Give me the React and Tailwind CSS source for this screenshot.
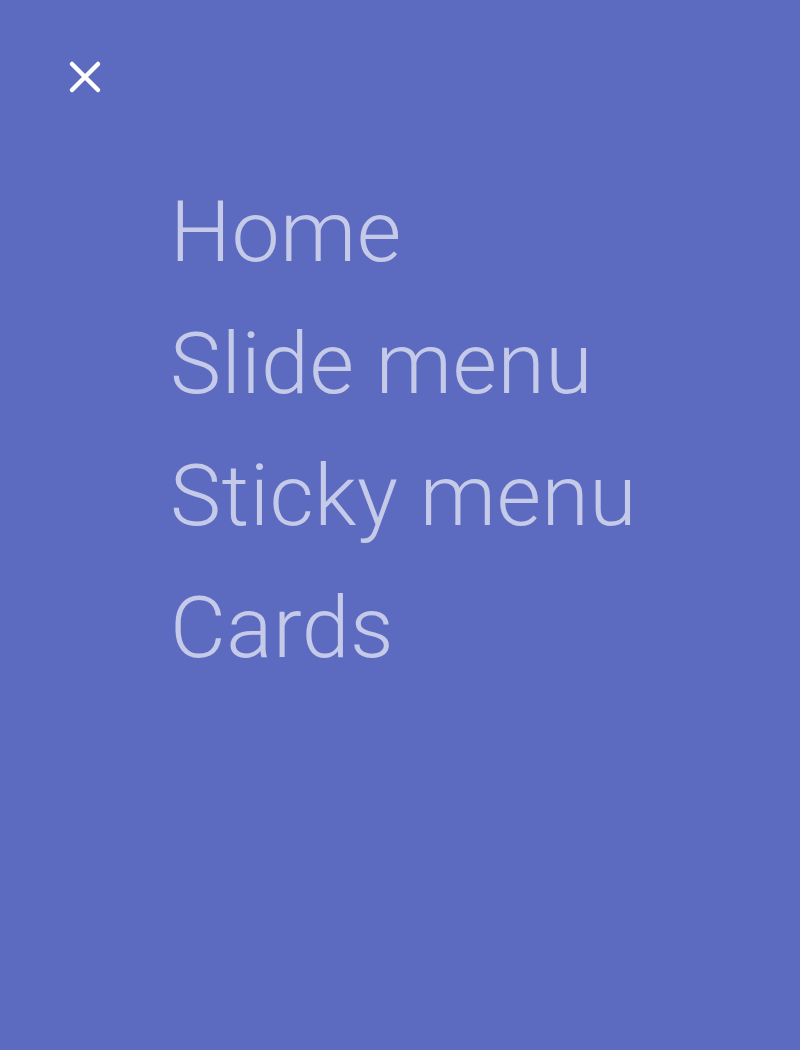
export default function App() {
  const links = ['Home', 'Slide menu', 'Sticky menu', 'Cards']

  return (
    <div className="min-h-[1050px] w-full bg-[#5c6bc0] font-['Roboto','Liberation_Sans',Arial,sans-serif]">
      <div className="px-[68px] pt-[60px]">
        <button
          type="button"
          aria-label="Close menu"
          className="flex h-[34px] w-[34px] items-center justify-center text-white"
        >
          <svg width="34" height="34" viewBox="0 0 34 34" fill="none">
            <path
              d="M4 4 L30 30 M30 4 L4 30"
              stroke="currentColor"
              strokeWidth="4.5"
              strokeLinecap="round"
            />
          </svg>
        </button>
      </div>

      <nav className="mt-[72px] pl-[170px]">
        <ul>
          {links.map((link) => (
            <li key={link}>
              <a
                href="#"
                className="block text-[86px] font-light leading-[132px] tracking-[0.5px] text-[#c5cae9]"
              >
                {link}
              </a>
            </li>
          ))}
        </ul>
      </nav>
    </div>
  )
}
